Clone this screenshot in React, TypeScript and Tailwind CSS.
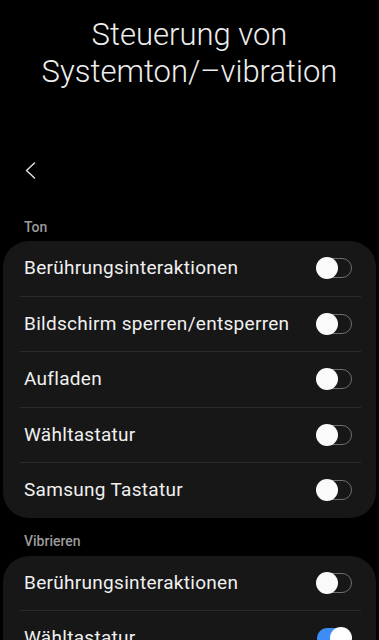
import React from "react";

type Item = { label: string; on?: boolean };

const ton: Item[] = [
  { label: "Berührungsinteraktionen" },
  { label: "Bildschirm sperren/entsperren" },
  { label: "Aufladen" },
  { label: "Wähltastatur" },
  { label: "Samsung Tastatur" },
];

const vibrieren: Item[] = [
  { label: "Berührungsinteraktionen" },
  { label: "Wähltastatur", on: true },
];

function Toggle({ on }: { on?: boolean }) {
  if (on) {
    return (
      <div className="relative h-[20px] w-[36px]">
        <div className="absolute left-[1px] top-0 h-[20px] w-[34px] rounded-full bg-[#3e8cf5]" />
        <div className="absolute right-0 top-[-1px] h-[22px] w-[22px] rounded-full bg-white" />
      </div>
    );
  }
  return (
    <div className="relative h-[20px] w-[36px]">
      <div className="absolute right-0 top-0 h-[20px] w-[34px] rounded-full border-[1.5px] border-[#6f6f6f]" />
      <div className="absolute left-0 top-[-1px] h-[22px] w-[22px] rounded-full bg-[#fafafa]" />
    </div>
  );
}

function Card({ items }: { items: Item[] }) {
  return (
    <div className="mx-[3px] rounded-[26px] bg-[#171717]">
      {items.map((it, i) => (
        <div key={i}>
          {i > 0 ? <div className="ml-[17px] mr-[15px] h-px bg-[#2b2b2b]" /> : null}
          <div className="flex h-[54.5px] items-center justify-between pl-[21px] pr-[24px]">
            <span className="text-[19px] tracking-[0.3px] text-[#f0f0f0]">{it.label}</span>
            <Toggle on={it.on} />
          </div>
        </div>
      ))}
    </div>
  );
}

export default function App() {
  return (
    <div
      className="h-[640px] w-[379px] overflow-hidden bg-black"
      style={{ fontFamily: "Roboto, 'Noto Sans', sans-serif" }}
    >
      <h1 className="pt-[16px] text-center text-[31px] font-light leading-[37px] text-[#ededed]">
        Steuerung von
        <br />
        Systemton/–vibration
      </h1>
      <div className="mt-[52px] flex h-[56px] items-center pl-[25px]">
        <svg width="11" height="17" viewBox="0 0 11 17" fill="none">
          <path d="M9.5 1 L1.5 8.5 L9.5 16" stroke="#e6e6e6" strokeWidth="1.4" strokeLinecap="round" strokeLinejoin="round" />
        </svg>
      </div>
      <div className="mt-[19px] h-[20px] pl-[24px] text-[14px] font-medium leading-[20px] text-[#9b9b9b]">Ton</div>
      <div className="mt-[4px]">
        <Card items={ton} />
      </div>
      <div className="mt-[13px] h-[20px] pl-[24px] text-[14px] font-medium leading-[20px] text-[#9b9b9b]">Vibrieren</div>
      <div className="mt-[5px]">
        <Card items={vibrieren} />
      </div>
    </div>
  );
}
